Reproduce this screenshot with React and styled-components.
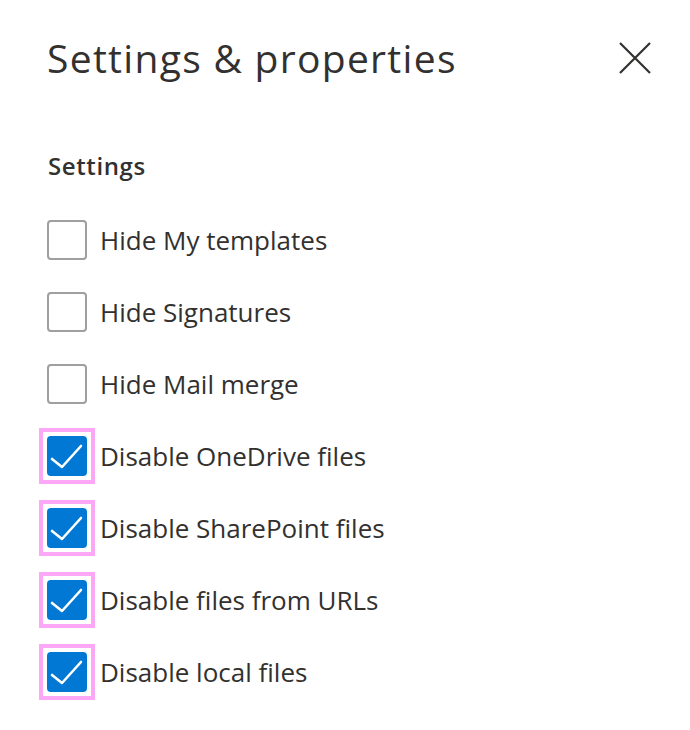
import styled, { createGlobalStyle } from "styled-components";

const GlobalStyle = createGlobalStyle`
  body {
    margin: 0;
    background: #ffffff;
    font-family: "Open Sans", "Noto Sans", sans-serif;
    color: #323130;
  }
`;

const Panel = styled.div`
  width: 690px;
  height: 730px;
  box-sizing: border-box;
  padding: 32px 38px 0 47px;
`;

const Header = styled.div`
  display: flex;
  align-items: center;
  justify-content: space-between;
  height: 52px;
`;

const Title = styled.h1`
  margin: 0;
  font-size: 39px;
  font-weight: 400;
  letter-spacing: 1.3px;
  line-height: 52px;
  color: #323130;
`;

const CloseButton = styled.button`
  display: flex;
  align-items: center;
  justify-content: center;
  width: 34px;
  height: 34px;
  padding: 0;
  border: none;
  background: transparent;
  color: #323130;
  cursor: pointer;
`;

const SectionTitle = styled.h2`
  margin: 66px 0 0 1px;
  font-size: 24px;
  font-weight: 600;
  letter-spacing: 0.6px;
  line-height: 32px;
`;

const List = styled.ul`
  list-style: none;
  margin: 38px 0 0;
  padding: 0;
  display: flex;
  flex-direction: column;
  gap: 32px;
`;

const Row = styled.li`
  display: flex;
  align-items: center;
  gap: 5px;
  height: 40px;
`;

const Frame = styled.span`
  flex: none;
  margin: -8px;
  padding: 4px;
  border: 4px solid ${(p) => (p.$active ? "#fca8f6" : "transparent")};
`;

const Box = styled.span`
  display: flex;
  align-items: center;
  justify-content: center;
  width: 40px;
  height: 40px;
  box-sizing: border-box;
  border-radius: 4px;
  border: ${(p) => (p.$checked ? "none" : "2px solid #a19f9d")};
  background: ${(p) => (p.$checked ? "#0078d4" : "#ffffff")};
`;

const Label = styled.span`
  margin-left: 8px;
  font-size: 26px;
  line-height: 40px;
  color: #323130;
`;

const options = [
  { label: "Hide My templates", checked: false },
  { label: "Hide Signatures", checked: false },
  { label: "Hide Mail merge", checked: false },
  { label: "Disable OneDrive files", checked: true },
  { label: "Disable SharePoint files", checked: true },
  { label: "Disable files from URLs", checked: true },
  { label: "Disable local files", checked: true },
];

const CheckMark = () => (
  <svg width="40" height="40" viewBox="0 0 40 40" fill="none">
    <path d="M5 23 L15 31 L34 10" stroke="#fff" strokeWidth="2.6" strokeLinecap="round" strokeLinejoin="round" />
  </svg>
);

const CloseIcon = () => (
  <svg width="32" height="32" viewBox="0 0 32 32" fill="none">
    <path d="M1 1 L31 31 M31 1 L1 31" stroke="currentColor" strokeWidth="2.2" />
  </svg>
);

export default function App() {
  return (
    <Panel>
      <GlobalStyle />
      <Header>
        <Title>Settings &amp; properties</Title>
        <CloseButton aria-label="Close">
          <CloseIcon />
        </CloseButton>
      </Header>
      <SectionTitle>Settings</SectionTitle>
      <List>
        {options.map((o) => (
          <Row key={o.label}>
            <Frame $active={o.checked}>
              <Box $checked={o.checked}>{o.checked && <CheckMark />}</Box>
            </Frame>
            <Label>{o.label}</Label>
          </Row>
        ))}
      </List>
    </Panel>
  );
}
